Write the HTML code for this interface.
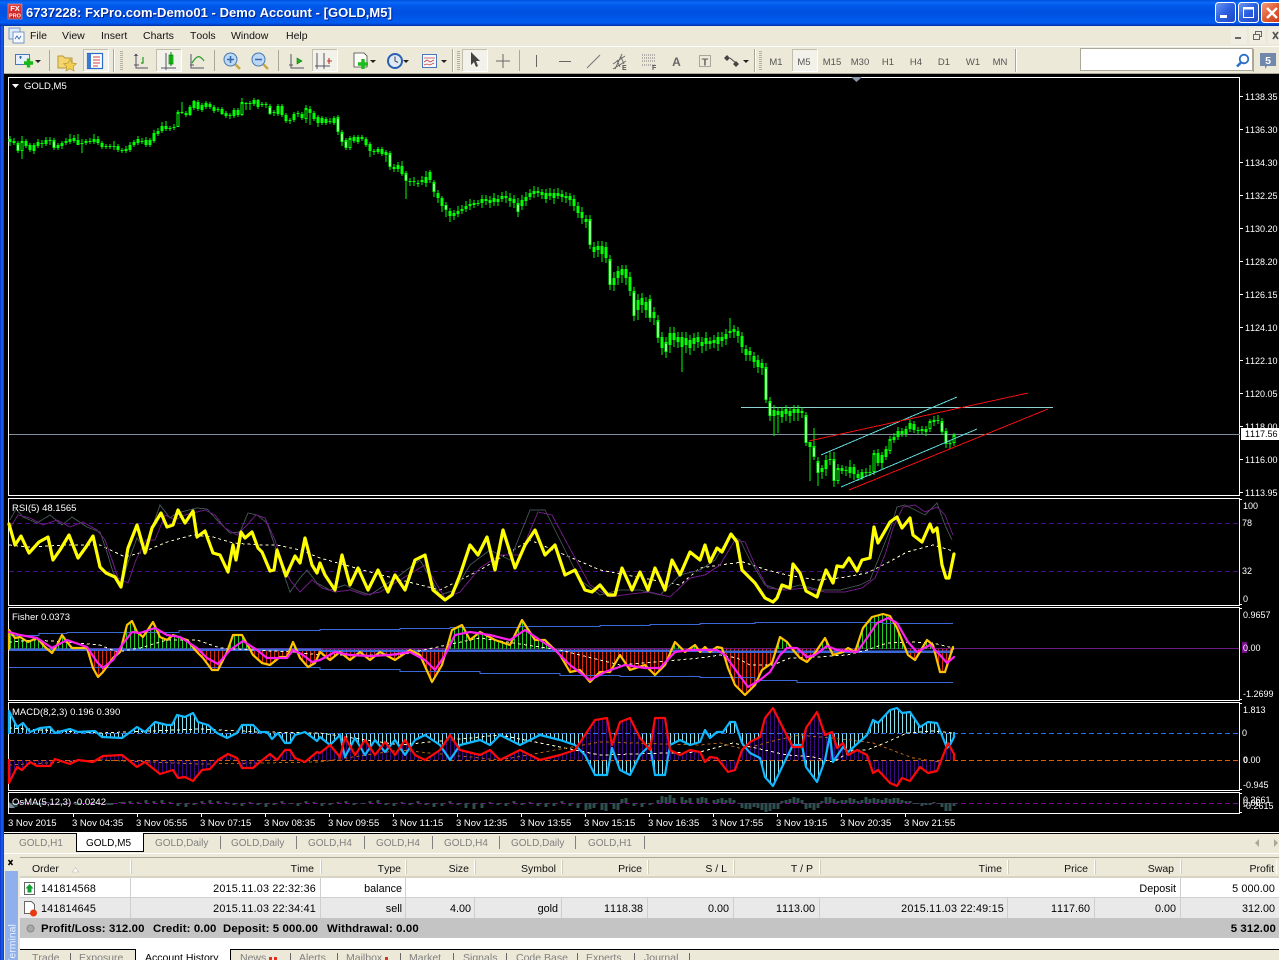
<!DOCTYPE html>
<html><head><meta charset="utf-8"><title>6737228: FxPro.com-Demo01 - Demo Account - [GOLD,M5]</title>
<style>
html,body{margin:0;padding:0;background:#ece9d8;overflow:hidden}
svg{display:block;font-family:"Liberation Sans",sans-serif;font-kerning:none}
.c{shape-rendering:crispEdges}
.ln{stroke-linejoin:round;stroke-linecap:round}
.ax text{font-size:9px;fill:#fff}
.tm text{font-size:9.5px;fill:#fff}
.mn text{font-size:10.5px;fill:#111}
.tf text{font-size:9.5px;fill:#555}
.tb text{font-size:10px;fill:#808080}
.th text{font-size:10.5px;fill:#111;text-anchor:end}
.td text{font-size:10.8px;fill:#000;text-anchor:end}
.bt text{font-size:10.5px;fill:#808080}
.tot text{font-size:11.4px;font-weight:bold;fill:#000;letter-spacing:.12px}
</style></head><body>
<svg width="1279" height="960" viewBox="0 0 1279 960" xmlns="http://www.w3.org/2000/svg">
<defs>
<linearGradient id="tg" x1="0" y1="0" x2="0" y2="1"><stop offset="0" stop-color="#0050dc"/><stop offset=".1" stop-color="#0a6af8"/><stop offset=".22" stop-color="#0058ea"/><stop offset=".5" stop-color="#0050e0"/><stop offset=".72" stop-color="#0058ea"/><stop offset=".88" stop-color="#005cf0"/><stop offset=".95" stop-color="#0040c8"/><stop offset="1" stop-color="#0030a8"/></linearGradient>
<linearGradient id="bb" x1="0" y1="0" x2="1" y2="1"><stop offset="0" stop-color="#6f98f0"/><stop offset=".5" stop-color="#2a5ee0"/><stop offset="1" stop-color="#2048c0"/></linearGradient>
<linearGradient id="br" x1="0" y1="0" x2="1" y2="1"><stop offset="0" stop-color="#f0a080"/><stop offset=".5" stop-color="#e05a30"/><stop offset="1" stop-color="#c83a18"/></linearGradient>
<linearGradient id="lb" x1="0" y1="0" x2="1" y2="0"><stop offset="0" stop-color="#0a30c8"/><stop offset=".5" stop-color="#1a62f0"/><stop offset="1" stop-color="#0838c8"/></linearGradient>
<linearGradient id="fx" x1="0" y1="0" x2="0" y2="1"><stop offset="0" stop-color="#e84040"/><stop offset="1" stop-color="#c01818"/></linearGradient>
<pattern id="pg" x="10" y="0" width="4" height="10" patternUnits="userSpaceOnUse"><rect width="1" height="10" fill="#20d020"/></pattern>
<pattern id="pr" x="10" y="0" width="4" height="10" patternUnits="userSpaceOnUse"><rect width="1" height="10" fill="#d82810"/></pattern>
<pattern id="pc" x="10" y="0" width="4" height="10" patternUnits="userSpaceOnUse"><rect width="1" height="10" fill="#88e0ec"/></pattern>
<pattern id="pp" x="10" y="0" width="4" height="10" patternUnits="userSpaceOnUse"><rect width="1" height="10" fill="#3c0a80"/></pattern>
<clipPath id="cu"><rect x="8" y="607" width="1000" height="42"/></clipPath>
<clipPath id="cd"><rect x="8" y="649" width="1000" height="52"/></clipPath>
<path id="fo" d="M9 649L9 630 15 638 20 637 28 642 37 638 45 647 52 653 57 645 62 635 67 642 72 648 87 648 93 668 98 677 103 672 113 658 120 652 127 625 132 621 137 632 143 637 153 622 160 637 167 640 173 635 187 640 197 652 203 658 212 670 218 670 227 652 233 635 242 635 253 655 262 663 270 665 280 657 287 657 293 642 300 658 308 667 315 663 320 652 330 660 340 652 350 660 360 652 370 660 380 652 395 660 410 650 420 655 432 682 442 665 452 630 462 625 470 640 480 632 495 640 510 645 522 620 535 640 545 640 560 655 570 672 580 670 590 682 600 672 610 672 620 655 630 670 645 665 655 675 665 665 675 642 685 652 695 645 700 652 705 647 710 652 717 647 722 648 728 668 735 685 745 695 755 685 762 670 772 663 780 637 787 642 793 650 800 658 807 662 815 653 825 638 833 655 843 652 848 648 855 652 863 628 872 617 883 614 890 616 897 628 908 655 915 660 927 640 933 645 940 672 945 672 953 647 953 649"/>
<path id="mb" d="M9 733L9 711 17 727 23 723 30 732 40 728 50 727 55 733 70 729 78 732 95 731 102 737 122 738 137 727 145 732 155 722 167 725 172 725 177 715 185 717 193 713 198 722 208 725 217 733 227 738 237 733 242 725 253 725 260 732 267 732 272 739 278 733 285 743 290 743 295 735 305 732 317 741 320 737 330 745 340 735 345 757 355 738 365 755 375 740 385 752 395 740 405 755 415 740 425 735 440 745 450 760 460 745 480 740 490 745 500 735 520 745 540 735 560 740 575 745 585 755 595 775 607 775 612 748 620 770 630 775 640 755 650 745 655 775 665 775 670 745 680 740 690 745 700 742 705 730 710 738 717 732 723 732 730 722 735 722 742 743 750 753 760 758 765 777 773 786 783 765 793 745 802 745 806 767 817 782 825 760 830 735 833 762 843 747 848 752 867 735 873 720 878 723 890 710 897 708 902 713 910 712 920 727 928 722 937 723 947 748 950 745 954 737 954 733"/>
<path id="mr" d="M9 760L9 783 17 767 22 770 30 762 37 766 50 766 55 759 70 764 78 760 93 762 103 756 122 755 137 767 145 762 160 774 173 770 178 778 185 777 193 781 202 770 210 769 218 760 228 754 237 758 242 768 253 768 260 762 270 754 277 760 285 750 290 750 295 758 305 762 317 752 320 753 330 745 340 757 345 737 355 755 365 740 375 755 385 742 395 755 405 740 415 755 425 760 440 750 450 735 460 750 480 755 490 750 500 760 520 750 540 760 560 755 575 750 585 735 595 720 607 718 612 745 620 722 630 718 640 738 650 750 655 718 665 718 670 750 680 755 690 750 700 752 705 762 710 757 717 758 728 772 735 770 742 750 750 742 760 737 765 718 773 708 783 728 793 747 802 747 806 728 817 712 825 735 832 732 837 748 843 743 848 755 857 750 867 755 873 773 878 770 890 783 897 786 902 778 910 781 920 767 928 773 937 771 948 743 954 754 954 760"/>
</defs>

<!-- window chrome -->
<rect width="1279" height="960" fill="#ece9d8"/>
<rect width="1279" height="26" fill="url(#tg)"/>
<rect x="0" y="26" width="4" height="934" fill="url(#lb)"/>
<rect x="8" y="4" width="14" height="15" fill="url(#fx)" stroke="#e8a0a0" stroke-width=".6"/>
<text x="15" y="11" font-size="7.5" font-weight="bold" fill="#fff" text-anchor="middle">FX</text>
<text x="15" y="17.5" font-size="5.5" font-weight="bold" fill="#fff" text-anchor="middle">PRO</text>
<text x="27" y="18" font-size="13" font-weight="bold" letter-spacing=".05" fill="#00208a">6737228: FxPro.com-Demo01 - Demo Account - [GOLD,M5]</text>
<text x="26" y="17" font-size="13" font-weight="bold" letter-spacing=".05" fill="#fff">6737228: FxPro.com-Demo01 - Demo Account - [GOLD,M5]</text>
<!-- window buttons -->
<g stroke="#fff">
<rect x="1215.5" y="2.5" width="20" height="20" rx="3" fill="url(#bb)"/>
<rect x="1238.5" y="2.5" width="20" height="20" rx="3" fill="url(#bb)"/>
<rect x="1261.5" y="2.5" width="20" height="20" rx="3" fill="url(#br)"/>
</g>
<rect x="1220" y="15" width="7" height="3" fill="#fff"/>
<rect x="1243.5" y="8" width="10" height="9.5" fill="none" stroke="#fff" stroke-width="1"/><rect x="1243" y="7" width="11" height="2.5" fill="#fff"/>
<path d="M1267 8L1277 18M1277 8L1267 18" stroke="#fff" stroke-width="2.4"/>

<!-- menu -->
<rect x="4" y="26" width="1275" height="20" fill="#ece9d8"/>
<rect x="4" y="46" width="1275" height="1" fill="#fff"/>
<rect x="9" y="28" width="11" height="11" fill="#dfeaf8" stroke="#5a80c0" stroke-width=".8"/>
<rect x="13" y="32" width="11" height="11" fill="#f4f8ff" stroke="#5a80c0" stroke-width=".8"/>
<path d="M15 39l2-3 2 3 2-3" fill="none" stroke="#3060b0" stroke-width=".8"/>
<g class="mn"><text x="30" y="39">File</text><text x="62" y="39">View</text><text x="101" y="39">Insert</text><text x="143" y="39">Charts</text><text x="190" y="39">Tools</text><text x="231" y="39">Window</text><text x="286" y="39">Help</text></g>
<g class="c"><rect x="1231" y="28" width="16" height="16" fill="#f0eee2"/><rect x="1249" y="28" width="16" height="16" fill="#f0eee2"/><rect x="1268" y="28" width="11" height="16" fill="#f0eee2"/>
<rect x="1235" y="37" width="6" height="2" fill="#666"/></g>
<path d="M1253.5 34.5h6v5h-6zM1255.5 34v-2.5h6v5h-2" fill="none" stroke="#666" stroke-width="1"/>
<path d="M1273 32l5 7M1278 32l-5 7" stroke="#555" stroke-width="1.7"/>

<!-- toolbar -->
<rect x="4" y="47" width="1275" height="27" fill="#ece9d8"/>
<rect x="4" y="73" width="1275" height="1" fill="#aca899"/>
<rect x="4" y="74" width="1275" height="2" fill="#000"/>
<g class="c">
<g fill="#aca899"><rect x="49" y="50" width="1" height="21"/><rect x="113" y="49" width="1" height="23"/><rect x="214" y="50" width="1" height="21"/><rect x="278" y="50" width="1" height="21"/><rect x="452" y="49" width="1" height="23"/><rect x="519" y="50" width="1" height="21"/><rect x="754" y="49" width="1" height="23"/><rect x="1015" y="49" width="1" height="23"/><rect x="1253" y="49" width="1" height="23"/></g>
<g fill="#fff"><rect x="114" y="49" width="1" height="23"/><rect x="453" y="49" width="1" height="23"/><rect x="755" y="49" width="1" height="23"/><rect x="1016" y="49" width="1" height="23"/></g>
<path d="M121.500 51v20M458.500 51v20M760.500 51v20" stroke="#b5b1a0" stroke-width="3" stroke-dasharray="1 1" fill="none"/>
<g fill="#f3f2ea"><rect x="83" y="49" width="26" height="23"/><rect x="156" y="49" width="26" height="23"/><rect x="312" y="49" width="26" height="23"/><rect x="462" y="49" width="26" height="23"/><rect x="792" y="49" width="26" height="23"/></g>
<path fill="none" stroke="#c2bfae" d="M83.500 71V49.500H108M156.500 71V49.500H181M312.500 71V49.500H337M462.500 71V49.500H487M792.500 71V49.500H817"/>
<path fill="none" stroke="#fff" d="M83.500 71.500H108.500V49.500M156.500 71.500H181.500V49.500M312.500 71.500H337.500V49.500M462.500 71.500H487.500V49.500M792.500 71.500H817.500V49.500"/>
</g>
<!-- new chart -->
<rect x="15.5" y="54.5" width="14" height="10" fill="#e8f0fc" stroke="#4a78b8"/>
<path d="M19 57h3M20.5 56v3" stroke="#3868a8"/>
<path d="M24 63h9M28.5 58.5v9" stroke="#18b818" stroke-width="3.4"/>
<path d="M35 60h6l-3 3z" fill="#222"/>
<!-- favourites -->
<path d="M58 56h5l2 2h7v10H58z" fill="#f4d66e" stroke="#b8983c"/>
<path d="M70 59l2 4 4.4.6-3.2 3 .8 4.4-4-2.2-4 2.2.8-4.4-3.2-3 4.4-.6z" fill="#f2cf50" stroke="#b8983c" stroke-width=".7"/>
<!-- navigator -->
<rect x="87.5" y="53.5" width="15" height="15" fill="#fff" stroke="#2b6cc4" stroke-width="1.2"/><rect x="87" y="54" width="4" height="14" fill="#3a7ad0"/>
<path d="M93 57h7M93 60h7M93 63h7M93 66h5" stroke="#d04040"/>
<!-- chart types -->
<g fill="none" stroke="#556" class="c">
<path d="M136 54v14h12M136 54l-1.500 2M136 54l1.500 2M134 65h5"/>
<path d="M161 68h15M166 53v17"/><path d="M191 54v14h13M190 65h4"/>
<path d="M291 54v14h13M289 65h4"/><path d="M317 53v16M315 66h15M324 53v16"/>
</g>
<path d="M143 57v6h-2" fill="none" stroke="#1a9a1a" stroke-width="1.2"/>
<rect x="169" y="55" width="4" height="9" fill="#18d818" stroke="#0a7a0a" stroke-width=".7"/><path d="M171 52v14" stroke="#0a7a0a"/>
<path d="M192 63q5-8 8-6t4 4" fill="none" stroke="#2a9a2a" stroke-width="1.200"/>
<path d="M297 58l5 3-5 3z" fill="#20b020" stroke="#0a7a0a" stroke-width=".6"/>
<path d="M332 61h-5M329 58v6" stroke="#c03020" stroke-width="1.100"/>
<!-- zoom -->
<g stroke="#4878b0" fill="#bcd8f4"><circle cx="230.500" cy="59.500" r="6.500"/><circle cx="258.500" cy="59.500" r="6.500"/></g>
<path d="M235.500 64.500l4.500 4.500M263.500 64.500l4.500 4.500" stroke="#c8a848" stroke-width="2.600"/>
<path d="M227 59.500h7M230.500 56v7M255 59.500h7" stroke="#3868b0" stroke-width="1.600"/>
<!-- new order -->
<path d="M354 53h10l3 3v11h-13z" fill="#fdfdf8" stroke="#444" stroke-width=".8"/>
<path d="M358 64h10M363 59v10" stroke="#1cbc1c" stroke-width="3.400"/>
<path d="M370 60h6l-3 3z" fill="#222"/>
<!-- clock -->
<circle cx="395" cy="61" r="7" fill="#dfe8f4" stroke="#2a60b0" stroke-width="2"/><path d="M395 56.500v4.500l3 1.500" fill="none" stroke="#444"/>
<path d="M403 60h6l-3 3z" fill="#222"/>
<!-- templates -->
<rect x="422.500" y="54.500" width="14" height="13" fill="#f4f8ff" stroke="#4a78b8"/><path d="M424 58h11M424 62l3-2 3 2 4-2M424 65l3-1 3 1 4-2" fill="none" stroke="#d04030" stroke-width=".8"/>
<path d="M441 60h6l-3 3z" fill="#222"/>
<!-- draw tools -->
<path d="M471 52v13l3-3 2 5 2-1-2-5h4z" fill="#444"/>
<path d="M503 54v14M496 61h14M501 61h4" stroke="#666" stroke-width="1"/>
<g class="c" stroke="#666"><path d="M536.500 55v12M559 61.500h12"/></g>
<path d="M587 68l13-13" stroke="#777" stroke-width="1.100"/>
<path d="M613 64l12-8M613 69l13-8M617 60l3 7M621 57l3 7M622 54l-7 15" stroke="#666" fill="none" stroke-width=".9"/>
<text x="622" y="70" font-size="7" font-weight="bold" fill="#555">E</text>
<path d="M642 55h13M642 58h13M642 61h13M642 65h13" stroke="#777" stroke-dasharray="1 1"/>
<text x="652" y="70" font-size="7" font-weight="bold" fill="#555">F</text>
<text x="676.500" y="66" font-size="12" font-weight="bold" fill="#666" text-anchor="middle">A</text>
<rect x="699.500" y="55.500" width="11" height="11" fill="none" stroke="#666" stroke-dasharray="1 1"/>
<text x="705" y="65.500" font-size="10.500" font-weight="bold" fill="#666" text-anchor="middle">T</text>
<path d="M727 55l3 3-3 3-3-3zM736 61l3 3-3 3-3-3z" fill="#444"/><path d="M730 58l6 5" stroke="#444"/>
<path d="M743 60h6l-3 3z" fill="#222"/>
<g class="tf"><text x="776" y="65" text-anchor="middle">M1</text><text x="804" y="65" text-anchor="middle">M5</text><text x="832" y="65" text-anchor="middle">M15</text><text x="860" y="65" text-anchor="middle">M30</text><text x="888" y="65" text-anchor="middle">H1</text><text x="916" y="65" text-anchor="middle">H4</text><text x="944" y="65" text-anchor="middle">D1</text><text x="973" y="65" text-anchor="middle">W1</text><text x="1000" y="65" text-anchor="middle">MN</text></g>
<rect x="1080.500" y="48.500" width="172" height="22" fill="#fff" stroke="#aca899" class="c"/>
<circle cx="1244" cy="59" r="4.300" fill="#fff" stroke="#2a70c8" stroke-width="1.800"/><path d="M1241 62.500l-4 4" stroke="#2a70c8" stroke-width="2.600"/>
<path d="M1260 53h16v13h-9l-2 3v-3h-5z" fill="#7088ac"/><text x="1268" y="64" font-size="10.500" font-weight="bold" fill="#fff" text-anchor="middle">5</text>

<!-- chart background -->
<rect x="4" y="76" width="1275" height="756" fill="#000"/>
<g class="c" fill="none" stroke="#fff">
<rect x="8.500" y="77.500" width="1231" height="418"/>
<rect x="8.500" y="498.500" width="1231" height="107"/>
<rect x="8.500" y="607.500" width="1231" height="93"/>
<rect x="8.500" y="702.500" width="1231" height="88"/>
<rect x="8.500" y="792.500" width="1231" height="21"/>
<path d="M1240 96.500h3M1240 129.500h3M1240 162.500h3M1240 195.500h3M1240 228.500h3M1240 261.500h3M1240 294.500h3M1240 327.500h3M1240 360.500h3M1240 393.500h3M1240 426.500h3M1240 459.500h3M1240 492.500h3M1240 499.500h2M1240 604.500h2M1240 608.500h2M1240 699.500h2M1240 703.500h2M1240 789.500h2M1240 793.500h2M1240 812.500h2"/>
<path d="M73.500 814v3M137.500 814v3M201.500 814v3M265.500 814v3M329.500 814v3M393.500 814v3M457.500 814v3M521.500 814v3M585.500 814v3M649.500 814v3M713.500 814v3M777.500 814v3M841.500 814v3M905.500 814v3"/>
</g>
<path d="M12 84h7l-3.500 4z" fill="#fff"/>
<text x="24" y="89" font-size="9.500" fill="#fff">GOLD,M5</text>
<path d="M851 77h11l-5.500 5z" fill="#8898a8"/>

<!-- main horizontal -->
<g class="c">
<path d="M9 434.500H1240" stroke="#7f8f9f"/>
<path d="M741 407.500H1053" stroke="#8fd0d0"/>
<!-- wicks -->
<path fill="none" stroke="#00ff00" d="M10 136V146M14 138V145M18 141V153M22 136V159M26 139V148M30 143V152M34 143V154M38 139V148M42 140V148M46 137V146M50 137V145M54 138V150M58 143V150M62 141V149M66 138V145M70 134V144M74 135V143M78 134V145M82 139V153M86 139V145M90 138V144M94 134V144M98 136V145M102 141V149M106 144V149M110 144V149M114 141V150M118 144V152M122 148V153M126 146V153M130 142V152M134 140V147M138 136V145M142 138V144M146 137V147M150 138V147M154 130V143M158 128V136M162 122V133M166 121V131M170 126V131M174 124V130M178 110V127M182 102V114M186 111V117M190 105V116M194 100V110M198 100V111M202 103V112M206 101V109M210 102V109M214 105V113M218 107V112M222 107V115M226 111V118M230 113V119M234 108V118M238 108V117M242 98V116M246 102V110M250 101V110M254 98V106M258 99V109M262 102V107M266 102V108M270 104V115M274 110V116M278 104V116M282 104V117M286 113V123M290 118V124M294 112V122M298 111V117M302 112V120M306 105V123M310 106V125M314 111V121M318 115V127M322 116V125M326 117V125M330 118V124M334 116V125M338 115V135M342 130V146M346 138V150M350 136V150M354 135V143M358 135V144M362 135V141M366 137V147M370 142V157M374 149V155M378 147V154M382 147V156M386 150V162M390 151V170M394 164V172M398 162V172M402 161V176M406 171V199M410 178V186M414 177V186M418 180V187M422 176V185M426 171V187M430 170V183M434 180V197M438 190V203M442 196V212M446 202V217M450 208V222M454 210V220M458 206V217M462 205V214M466 201V212M470 199V210M474 200V208M478 200V206M482 195V208M486 195V205M490 196V208M494 193V206M498 195V206M502 192V202M506 191V203M510 193V207M514 195V208M518 198V217M522 195V210M526 192V206M530 189V200M534 186V198M538 187V197M542 189V199M546 189V203M550 188V200M554 189V204M558 188V199M562 190V202M566 192V203M570 193V206M574 195V211M578 202V218M582 207V224M586 215V228M590 215V249M594 242V258M598 241V257M602 241V262M606 242V263M610 255V290M614 272V291M618 266V285M622 265V283M626 265V285M630 272V296M634 287V321M638 294V320M642 293V313M646 297V318M650 295V322M654 307V325M658 315V343M662 332V355M666 337V358M670 327V353M674 327V347M678 332V348M682 332V372M686 332V353M690 335V355M694 333V351M698 332V348M702 337V353M706 332V351M710 337V349M714 335V348M718 332V351M722 332V347M726 329V345M730 318V338M734 325V338M738 327V343M742 332V353M746 345V361M750 347V361M754 352V368M758 355V373M762 359V375M766 363V403M770 397V421M774 405V436M778 407V433M782 407V423M786 405V421M790 407V423M794 405V421M798 405V421M802 407V418M806 412V446M810 442V481M814 428V460M818 457V486M822 465V479M826 455V476M830 452V465M834 452V487M838 464V484M842 465V474M846 466V476M850 460V478M854 464V480M858 470V481M862 469V480M866 468V476M870 465V476M874 450V475M878 449V466M882 452V470M886 446V460M890 436V454M894 433V443M898 427V440M902 428V437M906 426V437M910 419V432M914 421V433M918 427V434M922 426V434M926 426V436M930 419V432M934 416V426M938 415V424M942 418V435M946 428V448M950 440V449M954 433V446"/>
<!-- bodies -->
<path fill="none" stroke="#00ff00" stroke-width="3" d="M10 139V142M14 141V143M18 143V151M22 141V151M26 141V146M30 145V150M34 145V151M38 142V146M42 143V144M46 140V144M50 140V141M54 140V148M58 145V148M62 143V146M66 141V143M70 139V142M74 138V141M78 140V145M82 143V144M86 141V143M90 141V142M94 139V142M98 139V143M102 143V147M106 146V147M110 146V147M114 146V147M118 146V150M122 150V151M126 149V151M130 145V150M134 142V145M138 139V143M142 141V142M146 140V145M150 140V145M154 133V141M158 131V134M162 126V131M166 126V129M170 128V129M174 127V128M178 112V127M182 112V113M186 113V115M190 107V115M194 101V108M198 102V109M202 105V110M206 103V107M210 104V107M214 107V111M218 109V110M222 109V114M226 113V116M230 115V116M234 110V116M238 110V115M242 102V115M246 103V104M250 103V104M254 100V104M258 100V107M262 104V105M266 104V105M270 106V114M274 112V113M278 106V114M282 106V115M286 115V121M290 120V121M294 114V120M298 113V114M302 114V118M306 108V119M310 109V113M314 113V119M318 117V123M322 118V123M326 119V123M330 121V122M334 118V123M338 117V132M342 132V142M346 140V148M350 138V148M354 137V141M358 137V142M362 137V139M366 139V145M370 144V151M374 151V152M378 149V152M382 149V154M386 152V155M390 153V167M394 167V169M398 165V169M402 166V174M406 173V181M410 181V182M414 181V182M418 183V184M422 180V182M426 177V183M430 172V180M434 182V192M438 193V198M442 198V206M446 205V210M450 211V216M454 213V216M458 211V214M462 209V211M466 206V209M470 204V206M474 203V205M478 203V204M482 199V203M486 199V201M490 200V203M494 198V202M498 199V202M502 196V199M506 196V198M510 198V201M514 199V203M518 203V212M522 200V206M526 197V201M530 193V197M534 191V194M538 191V193M542 192V195M546 193V199M550 193V196M554 193V198M558 193V196M562 194V197M566 196V198M570 196V200M574 199V206M578 206V213M582 212V218M586 219V222M590 219V245M594 247V252M598 246V250M602 246V254M606 247V258M610 259V285M614 278V285M618 271V278M622 269V275M626 269V278M630 277V291M634 291V316M638 300V310M642 298V305M646 302V310M650 299V318M654 312V318M658 320V338M662 337V348M666 342V352M670 333V345M674 333V340M678 337V342M682 337V347M686 338V345M690 340V348M694 338V344M698 337V342M702 342V346M706 338V344M710 341V344M714 340V343M718 337V344M722 337V341M726 334V339M730 331V333M734 329V332M738 331V336M742 336V347M746 349V355M750 351V355M754 356V362M758 360V367M762 363V368M766 367V400M770 401V416M774 410V416M778 411V415M782 411V417M786 409V414M790 411V416M794 409V413M798 409V413M802 411V413M806 415V443M810 442V447M814 446V457M818 461V473M822 468V472M826 460V469M830 459V460M834 459V481M838 468V481M842 468V471M846 470V471M850 467V473M854 467V474M858 474V478M862 472V478M866 472V473M870 472V473M874 453V472M878 453V463M882 455V463M886 449V457M890 439V451M894 437V440M898 431V437M902 431V434M906 429V434M910 423V429M914 424V430M918 430V431M922 429V431M926 429V432M930 421V429M934 420V422M938 420V421M942 421V432M946 431V444M950 443V444M954 435V443"/>
<!-- inner white/black -->
<path stroke="#fff" fill="none" d="M18 145V150M54 142V147M270 108V113M338 119V131M342 134V141M346 142V147M390 155V166M406 175V180M434 184V191M446 206V209M518 205V211M590 221V244M610 261V284M634 293V315M650 301V317M658 322V337M666 344V351M766 369V399M770 403V415M806 417V442M814 448V456M818 463V472M834 461V480M942 423V431M946 433V443"/>
<path stroke="#000" fill="none" d="M22 143V150M178 114V126M242 104V114M350 140V147M306 110V118M838 470V480M874 455V471M890 441V450M930 423V428M954 437V442"/>
</g>
<!-- trend lines -->
<g fill="none" class="c">
<path d="M821 455L957 397M841 487L977 429" stroke="#60d8d8"/>
<path d="M809 441L1028 393M849 490L1048 409" stroke="#f01010"/>
</g>
<!-- price labels -->
<g class="ax">
<text x="1245" y="100">1138.35</text><text x="1245" y="133">1136.30</text><text x="1245" y="166">1134.30</text><text x="1245" y="199">1132.25</text><text x="1245" y="232">1130.20</text><text x="1245" y="265">1128.20</text><text x="1245" y="298">1126.15</text><text x="1245" y="331">1124.10</text><text x="1245" y="364">1122.10</text><text x="1245" y="397">1120.05</text><text x="1245" y="430">1118.00</text><text x="1245" y="463">1116.00</text><text x="1245" y="496">1113.95</text>
</g>
<rect x="1241" y="428" width="38" height="12" fill="#fff" class="c"/>
<text x="1245" y="437" font-size="9" fill="#000">1117.56</text>

<!-- RSI -->
<g fill="none">
<g class="c">
<path d="M9 523.500H1239M9 571.500H1239" stroke="#4b0a90" stroke-dasharray="5 3"/>
<path d="M9 545L29 547 67 545 100 545 125 557 143 552 167 542 193 535 213 537 233 543 260 545 277 545 300 550 320 558 370 572 440 590 480 570 530 540 600 570 680 585 700 568 720 565 743 562 767 570 787 575 817 580 840 578 867 573 887 563 907 552 933 545 953 551" stroke="#fffacd" stroke-dasharray="3 3"/>
<polyline stroke="#3f4f4f" points="10,520 16,509 23,517 37,523 50,515 62,525 72,517 87,527 100,532 107,552 113,572 122,585 128,562 137,538 147,552 153,525 160,505 170,518 177,513 197,508 207,509 217,520 230,533 240,532 248,513 257,515 267,523 277,552 283,572 290,592 300,578 307,570 317,583 330,590 345,585 355,590 370,595 385,585 400,575 420,560 440,595 455,590 470,565 490,550 510,560 530,510 545,510 560,540 580,580 600,595 620,590 640,590 660,595 680,575 700,570 715,560 730,535 740,540 750,560 765,585 780,590 800,585 820,590 840,590 860,585 870,580 880,555 890,530 897,507 905,505 915,510 925,515 937,503 945,525 952,540"/>
<polyline stroke="#6a1a80" points="10,528 18,515 30,518 43,525 57,520 70,527 83,522 97,530 105,540 112,560 118,578 128,583 136,560 146,540 155,540 165,515 175,520 185,515 205,510 215,515 225,528 237,535 247,525 256,515 265,518 275,540 282,562 290,580 300,592 312,580 322,588 335,592 350,590 365,595 380,592 400,580 425,565 445,598 460,592 480,568 500,555 520,555 538,512 552,515 568,545 590,585 610,597 630,594 650,592 670,597 690,578 705,575 720,565 735,540 745,542 755,565 768,588 785,590 805,588 825,592 845,592 862,588 875,578 885,555 893,528 903,507 915,505 925,512 937,507 945,515 953,535"/>
</g>
<polyline class="ln" stroke="#ffff00" stroke-width="3.2" points="9,524 15,545 21,536 29,553 39,542 48,537 53,560 60,550 69,535 78,558 86,547 93,536 100,567 106,573 115,577 121,587 128,548 137,525 145,553 152,528 161,513 167,527 173,525 178,510 185,523 193,511 197,537 205,531 213,553 220,555 228,572 233,545 236,560 241,532 245,538 252,532 258,548 262,552 270,571 274,570 277,550 286,576 295,556 300,563 305,538 312,565 317,573 320,563 325,575 335,590 342,555 350,585 358,568 368,590 378,570 388,592 395,575 405,590 415,560 425,555 433,590 445,600 452,595 460,575 470,545 478,555 487,537 495,570 503,530 515,568 525,545 535,530 545,555 555,545 565,575 575,570 585,590 592,592 600,585 608,595 615,595 622,568 632,590 640,572 648,590 655,568 665,590 672,560 680,575 690,552 700,560 705,545 710,562 717,548 722,552 731,534 737,542 742,570 755,583 765,598 773,602 777,598 782,585 790,588 793,564 800,573 806,591 817,597 826,570 833,583 837,566 843,567 849,558 857,571 862,560 870,558 874,527 878,543 890,522 897,517 902,528 910,518 913,535 922,542 930,524 933,532 937,528 942,565 946,578 949,578 954,554"/>
</g>
<text x="12" y="511" font-size="9.500" fill="#fff">RSI(5) 48.1565</text>
<g class="ax"><text x="1243" y="509">100</text><text x="1242" y="526">78</text><text x="1242" y="574">32</text><text x="1243" y="602">0</text></g>

<!-- Fisher -->
<g fill="none">
<g class="c">
<path d="M9 648.500H1239" stroke="#6a1a80"/>
<use href="#fo" fill="url(#pg)" fill-rule="evenodd" clip-path="url(#cu)"/>
<use href="#fo" fill="url(#pr)" fill-rule="evenodd" clip-path="url(#cd)"/>
<path d="M9 635.500H39V633.500H67V632.500H179V630.500H320V629.500H400V628.500H450V627.500H520V626.500H600V625.500H650V624.500H700V623.500H755V622.500H883V623.500H953" stroke="#3a68d8"/>
<path d="M9 667.500H320V669.500H400V671.500H480V673.500H560V675.500H620V676.500H700V677.500H755V680.500H797V682.500H953" stroke="#3a68d8"/>
<path d="M9 649.500H320V650.500H700V651.500H953" stroke="#3a68d8" stroke-width="2.500"/>
<path d="M9 642L33 640 67 642 100 645 117 652 140 648 167 640 197 640 220 648 253 650 293 652 320 655 400 655 480 638 560 650 620 665 700 658 720 655 737 658 750 665 773 665 790 658 817 657 847 655 867 650 887 643 913 642 933 643 953 648" stroke="#fffacd" stroke-dasharray="3 3"/>
</g>
<use href="#fo" class="ln" stroke="#ffc400" stroke-width="2.200"/>
<polyline class="ln" stroke="#ff20f0" stroke-width="2.200" points="9,632 20,635 37,638 52,648 67,640 87,647 97,662 103,668 113,660 122,645 132,632 140,633 155,628 167,635 180,637 197,648 207,658 218,664 230,650 243,641 257,650 267,658 277,658 287,658 293,650 303,655 312,662 320,660 335,652 350,655 370,656 390,655 410,652 425,660 435,670 445,655 455,635 470,632 490,635 510,640 525,630 540,640 555,650 570,665 590,680 605,672 625,665 645,668 660,668 675,652 690,650 700,650 717,650 725,655 737,672 748,687 760,680 770,672 780,655 787,648 797,648 807,657 815,655 827,646 837,650 857,652 867,638 877,623 888,618 897,623 908,642 917,652 930,645 940,655 947,663 954,657"/>
</g>
<text x="12" y="620" font-size="9.500" fill="#fff">Fisher 0.0373</text>
<rect x="1242" y="642" width="5" height="11" fill="#7a0a90" class="c"/>
<g class="ax"><text x="1243" y="618">0.9657</text><text x="1243" y="651">0.00</text><text x="1243" y="697">-1.2699</text></g>

<!-- MACD -->
<g fill="none">
<g class="c">
<use href="#mb" fill="url(#pc)" fill-rule="evenodd"/>
<use href="#mr" fill="url(#pp)" fill-rule="evenodd"/>
<path d="M9 733.500H1239" stroke="#2a6cf0" stroke-dasharray="5 3"/>
<path d="M9 760.500H1239" stroke="#e05a10" stroke-dasharray="5 3"/>
<path d="M9 728L60 731 100 733 200 729 260 732 320 733 400 745 500 735 600 755 700 752 733 743 760 749 787 755 813 757 833 762 853 750 867 750 887 742 907 733 933 731 953 733" stroke="#fffacd" stroke-dasharray="3 3"/>
<path d="M9 765L100 760 200 764 320 762 400 750 500 760 600 742 700 745 720 743 743 749 777 740 800 735 850 740 873 743 913 758 940 762" stroke="#b06010" stroke-dasharray="3 3"/>
</g>
<use href="#mb" class="ln" stroke="#10b8ff" stroke-width="2.200"/>
<use href="#mr" class="ln" stroke="#ff0808" stroke-width="2.200"/>
</g>
<text x="12" y="715" font-size="9.500" fill="#fff">MACD(8,2,3) 0.196 0.390</text>
<g class="ax"><text x="1243" y="713">1.813</text><text x="1242" y="736">0</text><text x="1243" y="763" font-weight="bold">0</text><text x="1248" y="763">.00</text><text x="1243" y="788">-0.945</text></g>

<!-- OsMA -->
<g class="c" fill="none">
<path d="M9 803.500H1239" stroke="#7a0a90" stroke-dasharray="5 3"/>
<path stroke="#2f4f4f" stroke-width="3" d="M130 803v-2M138 803v-1M146 803v-3M154 803v-2M162 803v-3M170 803v-1M178 803v3M186 803v4M194 803v2M202 803v-2M210 803v-3M218 803v-2M226 803v-1M234 803v2M242 803v3M250 803v-1M258 803v2M266 803v4M274 803v2M282 803v-2M290 803v1M298 803v3M306 803v-2M314 803v-1M322 803v3M330 803v2M338 803v-1M346 803v-2M354 803v2M362 803v1M370 803v-2M378 803v-3M386 803v2M394 803v3M402 803v-1M410 803v2M418 803v-2M426 803v2M434 803v4M442 803v3M450 803v-2M458 803v2M466 803v5M474 803v6M482 803v5M490 803v-1M498 803v2M506 803v3M514 803v-2M522 803v2M530 803v-1M538 803v3M546 803v4M554 803v3M562 803v-2M570 803v3M578 803v5M586 803v7M590 803v6M594 803v5M602 803v7M606 803v8M614 803v6M618 803v7M622 803v-4M626 803v-5M634 803v3M642 803v4M650 803v2M658 803v-3M662 803v-7M666 803v-6M670 803v-8M674 803v-5M682 803v-6M686 803v-3M690 803v-5M698 803v-5M702 803v-6M706 803v-5M714 803v-3M718 803v-4M722 803v-5M726 803v-3M730 803v-5M734 803v-3M742 803v5M746 803v6M750 803v6M754 803v4M758 803v5M762 803v7M766 803v9M770 803v8M774 803v6M778 803v6M782 803v-2M786 803v-3M790 803v-4M794 803v-6M798 803v-5M802 803v-3M806 803v6M810 803v5M814 803v7M818 803v5M822 803v-2M826 803v-6M830 803v-6M834 803v-4M838 803v-2M842 803v-3M846 803v-3M850 803v-5M854 803v-4M858 803v-2M862 803v-3M866 803v-6M870 803v-4M874 803v-5M878 803v-4M882 803v-3M886 803v-5M890 803v-4M894 803v-5M898 803v-5M902 803v-3M906 803v-2M910 803v-2M914 803v1M918 803v1M922 803v3M926 803v2M930 803v2M934 803v-1M938 803v1M942 803v4M946 803v8M950 803v8M954 803v3"/>
<path stroke="#2f4f4f" stroke-width="7" d="M14 803v4M22 803v-1M38 803v2M46 803v-1M62 803v1M78 803v2M94 803v-1M110 803v2M122 803v-1"/>
</g>
<path d="M9 802l6 6H9z" fill="#7f8f9f"/>
<text x="12" y="805" font-size="9.500" fill="#fff">OsMA(5,12,3) -0.0242</text>
<g class="ax"><text x="1243" y="803">0.2661</text><text x="1243" y="806">0.00</text><text x="1243" y="809">-0.2615</text></g>

<!-- time axis -->
<g class="tm"><text x="8" y="826">3 Nov 2015</text><text x="72" y="826">3 Nov 04:35</text><text x="136" y="826">3 Nov 05:55</text><text x="200" y="826">3 Nov 07:15</text><text x="264" y="826">3 Nov 08:35</text><text x="328" y="826">3 Nov 09:55</text><text x="392" y="826">3 Nov 11:15</text><text x="456" y="826">3 Nov 12:35</text><text x="520" y="826">3 Nov 13:55</text><text x="584" y="826">3 Nov 15:15</text><text x="648" y="826">3 Nov 16:35</text><text x="712" y="826">3 Nov 17:55</text><text x="776" y="826">3 Nov 19:15</text><text x="840" y="826">3 Nov 20:35</text><text x="904" y="826">3 Nov 21:55</text></g>

<!-- chart tabs -->
<rect x="4" y="832" width="1275" height="21" fill="#ece9d8"/>
<rect x="4" y="832" width="1275" height="1" fill="#fff"/>
<rect x="4" y="833" width="1275" height="1" fill="#000"/>
<rect x="4" y="853" width="1275" height="1" fill="#fff"/>
<rect x="4" y="854" width="1275" height="3" fill="#ece9d8"/>
<rect x="76.500" y="833.500" width="67" height="18" fill="#fff" stroke="#000" class="c"/><rect x="77" y="832" width="66" height="3" fill="#fff"/>
<rect x="143" y="834" width="1" height="18" fill="#000"/><rect x="77" y="851" width="67" height="1" fill="#000"/>
<g class="tb"><text x="19" y="846">GOLD,H1</text><text x="155" y="846">GOLD,Daily</text><text x="231" y="846">GOLD,Daily</text><text x="308" y="846">GOLD,H4</text><text x="376" y="846">GOLD,H4</text><text x="444" y="846">GOLD,H4</text><text x="511" y="846">GOLD,Daily</text><text x="588" y="846">GOLD,H1</text></g>
<text x="86" y="846" font-size="10" fill="#000">GOLD,M5</text>
<path class="c" stroke="#808080" d="M220.500 836v13M296.500 836v13M364.500 836v13M432.500 836v13M499.500 836v13M575.500 836v13M644.500 836v13"/>
<path d="M1259 839v8l-4-4zM1274 839v8l4-4z" fill="#aca899"/>

<!-- terminal -->
<rect x="4" y="854" width="16" height="106" fill="#ece9d8"/>
<path d="M8.500 860l4 5M12.500 860l-4 5" stroke="#000" stroke-width="1.500"/>
<rect x="5" y="871" width="13" height="89" fill="#8fb0ec"/>
<text transform="translate(15.500 965) rotate(-90)" font-size="10.500" fill="#e8f0ff">Terminal</text>
<rect x="20" y="857" width="1259" height="1" fill="#aca899"/>
<rect x="20" y="858" width="1259" height="18" fill="#ece9d8"/>
<rect x="20" y="876" width="1259" height="2" fill="#d8d4c4"/>
<path class="c" stroke="#fff" d="M130.500 860v14M320.500 860v14M405.500 860v14M474.500 860v14M561.500 860v14M647.500 860v14M733.500 860v14M819.500 860v14M1007.500 860v14M1094.500 860v14M1180.500 860v14M1276.500 860v14"/>
<path class="c" stroke="#cfccba" d="M131.500 860v14M321.500 860v14M406.500 860v14M475.500 860v14M562.500 860v14M648.500 860v14M734.500 860v14M820.500 860v14M1008.500 860v14M1095.500 860v14M1181.500 860v14"/>
<text x="32" y="872" font-size="10.500" fill="#111">Order</text><path d="M72.500 872l3-4.500 3 4.500z" fill="#fff" stroke="#bbb" stroke-width=".6"/>
<g class="th"><text x="314" y="872">Time</text><text x="401" y="872">Type</text><text x="469" y="872">Size</text><text x="556" y="872">Symbol</text><text x="642" y="872">Price</text><text x="727" y="872">S / L</text><text x="813" y="872">T / P</text><text x="1002" y="872">Time</text><text x="1088" y="872">Price</text><text x="1174" y="872">Swap</text><text x="1274" y="872">Profit</text></g>
<rect x="20" y="878" width="1259" height="20" fill="#fff"/>
<rect x="20" y="898" width="1259" height="20" fill="#e9e9e9"/>
<rect x="20" y="897" width="1259" height="1" fill="#d0d0d0"/>
<rect x="20" y="918" width="1259" height="20" fill="#c4c4c4"/>
<rect x="20" y="938" width="1259" height="11" fill="#fff"/>
<path class="c" stroke="#cfcfcf" d="M130.500 878v20M320.500 878v20M405.500 878v20M1180.500 878v20"/>
<path class="c" stroke="#cfcfcf" d="M130.500 898v20M320.500 898v20M405.500 898v20M474.500 898v20M561.500 898v20M647.500 898v20M733.500 898v20M819.500 898v20M1007.500 898v20M1094.500 898v20M1180.500 898v20"/>
<rect x="24.500" y="882.500" width="10" height="12" fill="#fff" stroke="#666"/><path d="M29.500 884l4 4.500h-2v4h-4v-4h-2z" fill="#10a030"/>
<path d="M24.500 901.500h7l3 3v9h-10z" fill="#fff" stroke="#666"/><circle cx="33.500" cy="913" r="3.500" fill="#e83810"/>
<g class="td"><text x="96" y="892" letter-spacing=".1">141814568</text><text x="316" y="892" letter-spacing=".2">2015.11.03 22:32:36</text><text x="402" y="892">balance</text><text x="1176" y="892">Deposit</text><text x="1275" y="892" letter-spacing=".1">5 000.00</text>
<text x="96" y="912" letter-spacing=".1">141814645</text><text x="316" y="912" letter-spacing=".2">2015.11.03 22:34:41</text><text x="402" y="912">sell</text><text x="471" y="912">4.00</text><text x="558" y="912">gold</text><text x="643" y="912">1118.38</text><text x="729" y="912">0.00</text><text x="815" y="912">1113.00</text><text x="1004" y="912" letter-spacing=".2">2015.11.03 22:49:15</text><text x="1090" y="912">1117.60</text><text x="1176" y="912">0.00</text><text x="1275" y="912">312.00</text></g>
<circle cx="30.500" cy="928.500" r="3.500" fill="#a8a8a8" stroke="#888"/>
<g class="tot"><text x="41" y="932">Profit/Loss: 312.00</text><text x="153" y="932">Credit: 0.00</text><text x="223" y="932">Deposit: 5 000.00</text><text x="327" y="932">Withdrawal: 0.00</text><text x="1276" y="932" text-anchor="end">5 312.00</text></g>

<!-- terminal tabs -->
<rect x="20" y="949" width="1259" height="1" fill="#000"/>
<rect x="20" y="950" width="1259" height="10" fill="#ece9d8"/>
<rect x="135" y="949" width="96" height="11" fill="#fff"/>
<path class="c" stroke="#000" d="M135.500 949v11M230.500 949v11"/>
<g class="bt"><text x="32" y="961">Trade</text><text x="79" y="961">Exposure</text><text x="240" y="961">News</text><text x="299" y="961">Alerts</text><text x="346" y="961">Mailbox</text><text x="409" y="961">Market</text><text x="463" y="961">Signals</text><text x="516" y="961">Code Base</text><text x="586" y="961">Experts</text><text x="644" y="961">Journal</text></g>
<text x="145" y="961" font-size="10.500" fill="#000">Account History</text>
<path class="c" stroke="#666" d="M70.500 953v7M290.500 953v7M337.500 953v7M400.500 953v7M453.500 953v7M506.500 953v7M577.500 953v7M634.500 953v7M689.500 953v7"/>
<rect x="269" y="957" width="3" height="3" fill="#e03020"/><rect x="274" y="957" width="3" height="3" fill="#e03020"/><rect x="385" y="957" width="3" height="3" fill="#e03020"/>
</svg>
</body></html>
